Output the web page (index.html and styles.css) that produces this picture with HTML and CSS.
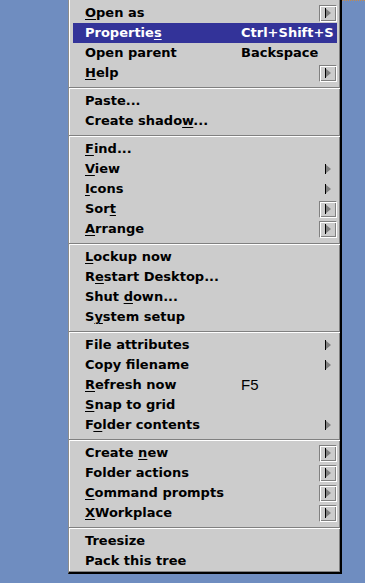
FILE: index.html
```html
<!DOCTYPE html>
<html lang="en">
<head>
    <meta charset="UTF-8">
    <meta name="viewport" content="width=device-width, initial-scale=1.0">
    <title>Folder context menu</title>
    <link rel="stylesheet" href="styles.css">
</head>
<body>
    <div class="desktop">
        <div class="marquee"></div>

        <div class="menu">
            <div class="item"><span class="label"><u>O</u>pen as</span><span class="sub boxed"><i class="arrow"></i></span></div>
            <div class="item active"><span class="label">Propertie<u>s</u></span><span class="key">Ctrl+Shift+S</span></div>
            <div class="item"><span class="label">Open parent</span><span class="key">Backspace</span></div>
            <div class="item"><span class="label"><u>H</u>elp</span><span class="sub boxed"><i class="arrow"></i></span></div>
            <div class="sep"></div>

            <div class="item"><span class="label">Paste...</span></div>
            <div class="item"><span class="label">Create shado<u>w</u>...</span></div>
            <div class="sep"></div>

            <div class="item"><span class="label"><u>F</u>ind...</span></div>
            <div class="item"><span class="label"><u>V</u>iew</span><span class="sub"><i class="arrow"></i></span></div>
            <div class="item"><span class="label"><u>I</u>cons</span><span class="sub"><i class="arrow"></i></span></div>
            <div class="item"><span class="label">Sor<u>t</u></span><span class="sub boxed"><i class="arrow"></i></span></div>
            <div class="item"><span class="label"><u>A</u>rrange</span><span class="sub boxed"><i class="arrow"></i></span></div>
            <div class="sep"></div>

            <div class="item"><span class="label"><u>L</u>ockup now</span></div>
            <div class="item"><span class="label">R<u>e</u>start Desktop...</span></div>
            <div class="item"><span class="label">Shut <u>d</u>own...</span></div>
            <div class="item"><span class="label">S<u>y</u>stem setup</span></div>
            <div class="sep"></div>

            <div class="item"><span class="label">File attributes</span><span class="sub"><i class="arrow"></i></span></div>
            <div class="item"><span class="label">Copy filename</span><span class="sub"><i class="arrow"></i></span></div>
            <div class="item"><span class="label"><u>R</u>efresh now</span><span class="key plain">F5</span></div>
            <div class="item"><span class="label"><u>S</u>nap to grid</span></div>
            <div class="item"><span class="label">F<u>o</u>lder contents</span><span class="sub"><i class="arrow"></i></span></div>
            <div class="sep"></div>

            <div class="item"><span class="label">Create <u>n</u>ew</span><span class="sub boxed"><i class="arrow"></i></span></div>
            <div class="item"><span class="label">Folder actions</span><span class="sub boxed"><i class="arrow"></i></span></div>
            <div class="item"><span class="label"><u>C</u>ommand prompts</span><span class="sub boxed"><i class="arrow"></i></span></div>
            <div class="item"><span class="label"><u>X</u>Workplace</span><span class="sub boxed"><i class="arrow"></i></span></div>
            <div class="sep"></div>

            <div class="item"><span class="label">Treesize</span></div>
            <div class="item"><span class="label">Pack this tree</span></div>
        </div>
    </div>
</body>
</html>
```

FILE: styles.css
```css
* {
    margin: 0;
    padding: 0;
    box-sizing: border-box;
}

body {
    background: #6f8dc0;
    width: 365px;
    height: 583px;
    overflow: hidden;
    font-family: 'DejaVu Sans', 'Verdana', sans-serif;
    font-size: 13px;
    font-weight: bold;
    color: #000;
}

.desktop {
    width: 365px;
    height: 583px;
    padding-left: 68px;
    position: relative;
}

/* dotted selection frame peeking out on the right */
.marquee {
    position: absolute;
    top: 0;
    left: 300px;
    width: 65px;
    border-top: 1px dotted #c48a4c;
}

.menu {
    position: relative;
    width: 274px;
    height: 574px;
    background: #cccccc;
    border-left: 1px solid #8c8c8c;
    border-right: 2px solid #000;
    border-bottom: 2px solid #000;
    box-shadow: inset -1px -1px 0 #808080, inset 1px 0 0 #ffffff;
    padding: 3px 3px 1px 4px;
}

.item {
    display: flex;
    align-items: center;
    height: 20px;
    line-height: 20px;
    padding-left: 12px;
    white-space: nowrap;
}

.item.active {
    background: #333399;
    color: #fff;
}

.label {
    width: 156px;
    flex: none;
}

.item u {
    text-decoration-thickness: 1px;
    text-underline-offset: 2px;
}

.key {
    flex: 1;
}

.key.plain {
    font-family: 'Liberation Sans', Arial, sans-serif;
    font-weight: normal;
    font-size: 15px;
}

.sub {
    width: 18px;
    height: 17px;
    margin-left: auto;
    display: flex;
    align-items: center;
    justify-content: center;
}

.sub.boxed {
    border: 1px solid;
    border-color: #808080 #ffffff #ffffff #808080;
    box-shadow: inset 1px 1px 0 #ffffff, inset -1px -1px 0 #808080;
}

.arrow {
    width: 0;
    height: 0;
    border-top: 5px solid transparent;
    border-bottom: 5px solid transparent;
    border-left: 6px solid #7f7f7f;
    position: relative;
}

.arrow::before {
    content: '';
    position: absolute;
    left: -6px;
    top: -5px;
    width: 1px;
    height: 10px;
    background: #000;
}

.sep {
    height: 2px;
    margin: 4px -3px 2px -4px;
    border-top: 1px solid #808080;
    border-bottom: 1px solid #ffffff;
}
```
